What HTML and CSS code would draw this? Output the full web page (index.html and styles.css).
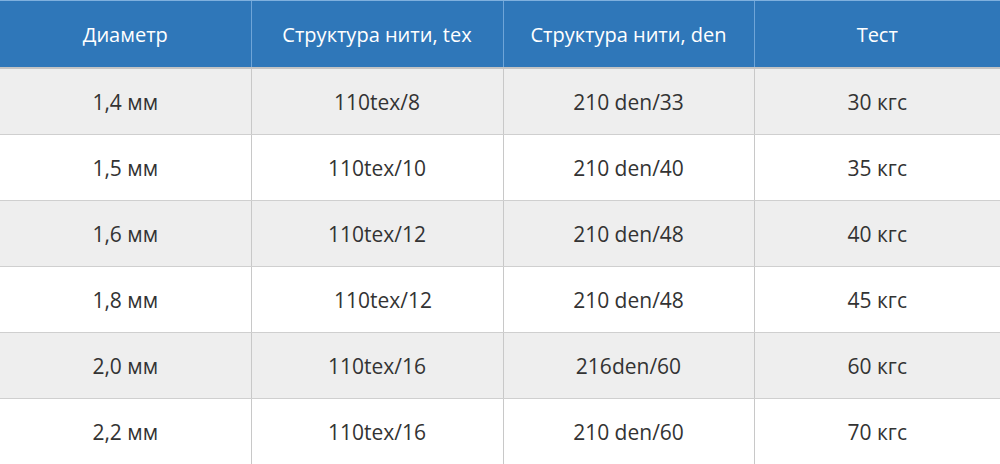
FILE: index.html
```html
<!DOCTYPE html>
<html lang="ru">
<head>
<meta charset="utf-8">
<link rel="stylesheet" href="styles.css">
</head>
<body>
<table class="spec">
  <colgroup>
    <col class="c1"><col class="c2"><col class="c3"><col class="c4">
  </colgroup>
  <thead>
    <tr><th>Диаметр</th><th>Структура нити, tex</th><th>Структура нити, den</th><th>Тест</th></tr>
  </thead>
  <tbody>
    <tr class="alt"><td>1,4 мм</td><td>110tex/8</td><td>210 den/33</td><td>30 кгс</td></tr>
    <tr><td>1,5 мм</td><td>110tex/10</td><td>210 den/40</td><td>35 кгс</td></tr>
    <tr class="alt"><td>1,6 мм</td><td>110tex/12</td><td>210 den/48</td><td>40 кгс</td></tr>
    <tr><td>1,8 мм</td><td><span class="shift">110tex/12</span></td><td>210 den/48</td><td>45 кгс</td></tr>
    <tr class="alt"><td>2,0 мм</td><td>110tex/16</td><td>216den/60</td><td>60 кгс</td></tr>
    <tr><td>2,2 мм</td><td>110tex/16</td><td>210 den/60</td><td>70 кгс</td></tr>
  </tbody>
</table>
</body>
</html>
```
FILE: styles.css
```css
html, body {
  margin: 0;
  padding: 0;
  background: #fff;
}
.spec {
  border-collapse: collapse;
  table-layout: fixed;
  width: 1000px;
  font-family: "Open Sans", "Noto Sans", sans-serif;
}
.c1 { width: 251px; }
.c2 { width: 252px; }
.c3 { width: 251px; }
.c4 { width: 246px; }
.spec th {
  background: #2f77b9;
  color: #fff;
  font-size: 20px;
  font-weight: 400;
  height: 66px;
  padding: 0;
  border-top: 1px solid #7fb0de;
  border-bottom: 2px solid #c4c4c4;
  border-left: 1px solid #6fa5d8;
  vertical-align: middle;
  text-align: center;
}
.spec th:first-child { border-left: none; }
.spec td {
  height: 65px;
  padding: 0;
  font-size: 21px;
  color: #333333;
  text-align: center;
  vertical-align: middle;
  border-left: 1px solid #c8c8c8;
  border-bottom: 1px solid #cfcfcf;
}
.spec td:first-child { border-left: none; }
.spec tr.alt td { background: #eeeeee; }
.shift { padding-left: 12px; }
```
